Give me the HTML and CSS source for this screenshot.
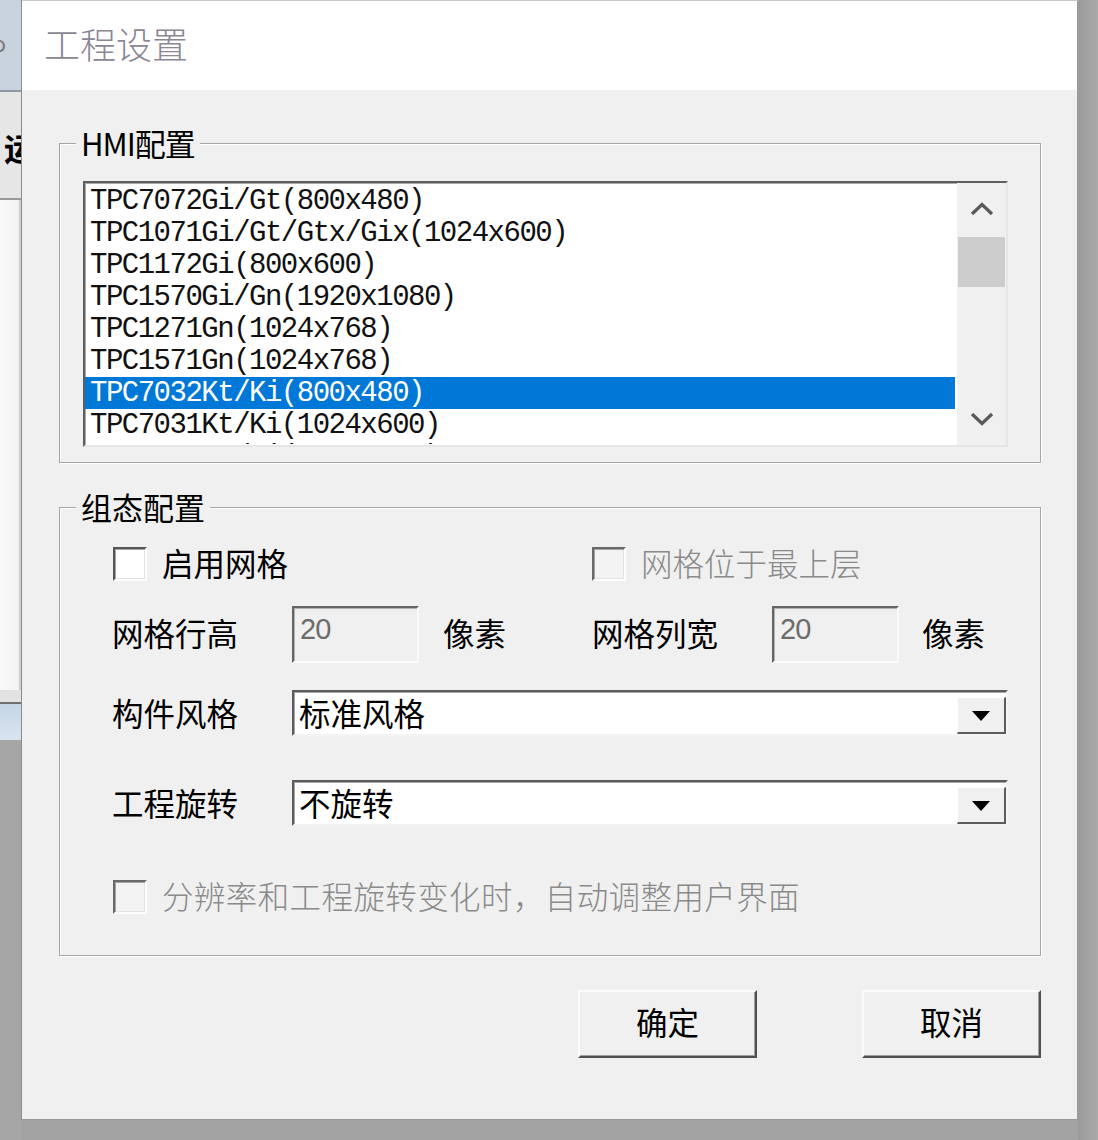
FILE: index.html
```html
<!DOCTYPE html>
<html lang="zh">
<head>
<meta charset="utf-8">
<title>工程设置</title>
<link rel="stylesheet" href="styles.css">
</head>
<body>
<div class="screen">
  <div class="bgapp">
    <div class="bg-top"><span class="bg-glyph">ɔ</span></div>
    <div class="bg-tool"><span class="bg-run">运</span></div>
    <div class="bg-work"></div>
    <div class="bg-status"></div>
    <div class="bg-blue"></div>
    <div class="bg-shade"></div>
  </div>

  <div class="dialog">
    <div class="titlebar"><span class="title">工程设置</span></div>
    <div class="dlg-body">
      <div class="group g-hmi">
        <span class="legend">HMI配置</span>
        <div class="listbox">
          <ul class="items">
            <li>TPC7072Gi/Gt(800x480)</li>
            <li>TPC1071Gi/Gt/Gtx/Gix(1024x600)</li>
            <li>TPC1172Gi(800x600)</li>
            <li>TPC1570Gi/Gn(1920x1080)</li>
            <li>TPC1271Gn(1024x768)</li>
            <li>TPC1571Gn(1024x768)</li>
            <li class="sel">TPC7032Kt/Ki(800x480)</li>
            <li>TPC7031Kt/Ki(1024x600)</li>
            <li>TPC1031Kt/Ki(1024x600)</li>
          </ul>
          <div class="vscroll">
            <div class="sb-btn sb-up">
              <svg width="24" height="14" viewBox="0 0 24 14"><path d="M2 12 L12 2.5 L22 12" fill="none" stroke="#5a5a5a" stroke-width="3.2"/></svg>
            </div>
            <div class="sb-thumb"></div>
            <div class="sb-track"></div>
            <div class="sb-btn sb-down">
              <svg width="24" height="14" viewBox="0 0 24 14"><path d="M2 2 L12 11.5 L22 2" fill="none" stroke="#5a5a5a" stroke-width="3.2"/></svg>
            </div>
          </div>
        </div>
      </div>

      <div class="group g-cfg">
        <span class="legend">组态配置</span>

        <div class="row row-check">
          <label class="chk chk-a"><span class="box"></span><span class="txt">启用网格</span></label>
          <label class="chk chk-b disabled"><span class="box"></span><span class="txt">网格位于最上层</span></label>
        </div>

        <div class="row row-input">
          <span class="lbl">网格行高</span>
          <span class="field">20</span>
          <span class="unit">像素</span>
          <span class="lbl">网格列宽</span>
          <span class="field">20</span>
          <span class="unit">像素</span>
        </div>

        <div class="row row-combo">
          <span class="lbl">构件风格</span>
          <div class="combo"><span class="combo-val">标准风格</span><span class="drop"><span class="tri"></span></span></div>
        </div>

        <div class="row row-combo row-combo2">
          <span class="lbl">工程旋转</span>
          <div class="combo"><span class="combo-val">不旋转</span><span class="drop"><span class="tri"></span></span></div>
        </div>

        <div class="row row-check row-last">
          <label class="chk chk-wide disabled"><span class="box"></span><span class="txt">分辨率和工程旋转变化时，自动调整用户界面</span></label>
        </div>
      </div>

      <div class="buttons">
        <button class="btn">确定</button>
        <button class="btn">取消</button>
      </div>
    </div>
  </div>

  <div class="rightshade"></div>
</div>
</body>
</html>
```

FILE: styles.css
```css
* { box-sizing: border-box; }

html, body {
  margin: 0;
  padding: 0;
  background: #a2a2a2;
}

body {
  font-family: "Noto Sans CJK SC", "Noto Sans", sans-serif;
  color: #000;
}

.screen {
  width: 1098px;
  height: 1140px;
  display: flex;
  align-items: flex-start;
  overflow: hidden;
  background: #a3a3a3;
}

/* ---------- background application strip ---------- */
.bgapp {
  width: 21px;
  height: 1140px;
  display: flex;
  flex-direction: column;
  overflow: hidden;
  flex: none;
}
.bg-top {
  height: 92px;
  background: #c9d3de;
  border-bottom: 2px solid #8f99a3;
  display: flex;
  align-items: center;
  overflow: hidden;
}
.bg-glyph {
  font-family: "DejaVu Sans", sans-serif;
  font-size: 22px;
  color: #7a7a7a;
  margin-left: -6px;
  line-height: 1;
}
.bg-tool {
  height: 108px;
  background: #e6e6e6;
  border-bottom: 2px solid #9a9a9a;
  display: flex;
  align-items: center;
  overflow: hidden;
  padding-top: 4px;
}
.bg-run {
  font-size: 32px;
  font-weight: 700;
  margin-left: 4px;
  line-height: 1;
  white-space: nowrap;
}
.bg-work {
  height: 490px;
  background: linear-gradient(90deg, #fafafa, #f2f2f2);
  border-right: 2px solid #d0d0d0;
}
.bg-status {
  height: 14px;
  background: #e2e2e2;
  border-bottom: 2px solid #6f6f6f;
}
.bg-blue {
  height: 36px;
  background: linear-gradient(#c6d6e8, #d9e4ef);
}
.bg-shade {
  flex: 1;
  background: #a6a6a6;
}

/* ---------- dialog ---------- */
.dialog {
  width: 1057px;
  height: 1120px;
  flex: none;
  background: #f0f0f0;
  box-shadow: inset 1px 0 0 #8c8c8c, inset 0 -1px 0 #9a9a9a, inset -1px 0 0 #9a9a9a;
  display: flex;
  flex-direction: column;
}

.titlebar {
  height: 90px;
  background: #fff;
  display: flex;
  align-items: center;
  padding-left: 23px;
  box-shadow: inset 1px 0 0 #8c8c8c, inset 0 1px 0 #c8c8c8, inset -1px 0 0 #9a9a9a;
}
.title {
  font-size: 36px;
  font-weight: 300;
  color: #8a8694;
  line-height: 1;
  margin-top: -5px;
}

.dlg-body {
  padding: 53px 37px 0 38px;
  display: flex;
  flex-direction: column;
}

/* group boxes */
.group {
  position: relative;
  border: 1px solid #a6a6a6;
  box-shadow: inset 1px 1px 0 #fff, 1px 1px 0 #fff;
  width: 982px;
}
.legend {
  position: absolute;
  top: -21px;
  left: 16px;
  padding: 0 5px;
  background: #f0f0f0;
  font-size: 31px;
  line-height: 40px;
  white-space: nowrap;
}
.g-hmi .legend {
  letter-spacing: -1px;
}

.g-hmi {
  height: 320px;
  padding: 37px 0 0 23px;
}

.listbox {
  width: 925px;
  height: 266px;
  border-style: solid;
  border-width: 2px;
  border-color: #5f5f5f #e6e6e6 #e6e6e6 #5f5f5f;
  box-shadow: inset 1px 1px 0 #a9a9a9;
  background: #fff;
  display: flex;
  overflow: hidden;
}
.items {
  list-style: none;
  margin: 0;
  padding: 2px 0 0 0;
  width: 870px;
  height: 261px;
  flex: none;
  overflow: hidden;
}
.items li {
  height: 32px;
  line-height: 34px;
  padding-left: 5px;
  font-family: "Liberation Mono", "DejaVu Sans Mono", monospace;
  font-size: 29px;
  letter-spacing: -1.5px;
  white-space: nowrap;
  color: #111;
}
.items li.sel {
  background: #0078d7;
  color: #fff;
}

.vscroll {
  width: 49px;
  margin-left: 2px;
  background: #f0f0f0;
  display: flex;
  flex-direction: column;
}
.sb-btn {
  display: flex;
  align-items: center;
  justify-content: center;
  flex: none;
}
.sb-up { height: 54px; padding-bottom: 2px; }
.sb-down { height: 48px; padding-bottom: 4px; }
.sb-thumb {
  height: 50px;
  margin: 0 1px;
  background: #cdcdcd;
  flex: none;
}
.sb-track { flex: 1; }

/* config group */
.g-cfg {
  margin-top: 44px;
  height: 449px;
  padding: 37px 0 0 52px;
}

.row {
  display: grid;
  grid-template-columns: 180px 127px 173px 180px 127px 109px;
  align-items: center;
}
.row-check { height: 38px; }
.row-input { height: 57px; margin-top: 23px; }
.row-combo { height: 46px; margin-top: 27px; }
.row-combo2 { margin-top: 44px; }
.row-last { margin-top: 52px; }

.lbl, .unit, .txt, .combo-val {
  font-size: 31.5px;
  line-height: 1;
  white-space: nowrap;
}
.unit { padding-left: 24px; }
.row-input .unit:last-child { padding-left: 23px; }
.row-input .lbl, .row-input .unit { margin-bottom: 4px; }

.chk {
  display: flex;
  align-items: center;
}
.chk-a { grid-column: 1 / 4; padding-left: 1px; }
.chk-b { grid-column: 4 / 7; }
.chk-wide { grid-column: 1 / 7; padding-left: 1px; }

.box {
  width: 34px;
  height: 34px;
  flex: none;
  border-style: solid;
  border-width: 2px;
  border-color: #555 #fdfdfd #fdfdfd #555;
  box-shadow: inset 1px 1px 0 #a3a3a3, inset -1px -1px 0 #e3e3e3;
  background: #fff;
}
.chk .txt { margin-left: 15px; margin-bottom: 3px; }
.chk.disabled .box {
  background: #f3f3f3;
  border-color: #6a6a6a #fdfdfd #fdfdfd #6a6a6a;
}
.chk.disabled .txt {
  color: #8a8a8a;
  font-weight: 300;
}
.chk-wide .txt { letter-spacing: 0.4px; }

.field {
  height: 57px;
  border-style: solid;
  border-width: 2px;
  border-color: #666 #fafafa #fafafa #666;
  box-shadow: inset 1px 1px 0 #b0b0b0;
  background: #f0f0f0;
  font-family: "Liberation Sans", Arial, sans-serif;
  font-size: 29px;
  line-height: 1;
  color: #6b6b6b;
  padding: 7px 0 0 6px;
  letter-spacing: -1px;
}

.combo {
  grid-column: 2 / 7;
  height: 46px;
  border-style: solid;
  border-width: 2px;
  border-color: #5c5c5c #f4f4f4 #f4f4f4 #5c5c5c;
  box-shadow: inset 1px 1px 0 #a6a6a6;
  background: #fff;
  display: flex;
  justify-content: space-between;
  padding-left: 5px;
}
.combo-val {
  align-self: center;
  margin-top: 0;
}
.drop {
  width: 49px;
  height: 37px;
  align-self: flex-end;
  background: #f0f0f0;
  border-style: solid;
  border-width: 1px 2px 2px 1px;
  border-color: #fff #5d5d5d #5d5d5d #fff;
  display: flex;
  align-items: center;
  justify-content: center;
}
.tri {
  width: 0;
  height: 0;
  border-left: 9px solid transparent;
  border-right: 9px solid transparent;
  border-top: 10px solid #000;
  margin-top: 1px;
}

/* buttons */
.buttons {
  margin-top: 34px;
  width: 982px;
  display: flex;
  justify-content: flex-end;
  gap: 105px;
}
.btn {
  width: 179px;
  height: 68px;
  background: #f0f0f0;
  border-style: solid;
  border-width: 2px;
  border-color: #fbfbfb #4f4f4f #4f4f4f #fbfbfb;
  box-shadow: inset -1px -1px 0 #a0a0a0;
  font-family: "Noto Sans CJK SC", "Noto Sans", sans-serif;
  font-size: 31.5px;
  line-height: 1;
  color: #000;
  padding: 0 0 4px 0;
}

.rightshade {
  width: 20px;
  height: 1140px;
  flex: none;
  background: linear-gradient(90deg, #9b9b9b, #a9a9a9);
}
```
